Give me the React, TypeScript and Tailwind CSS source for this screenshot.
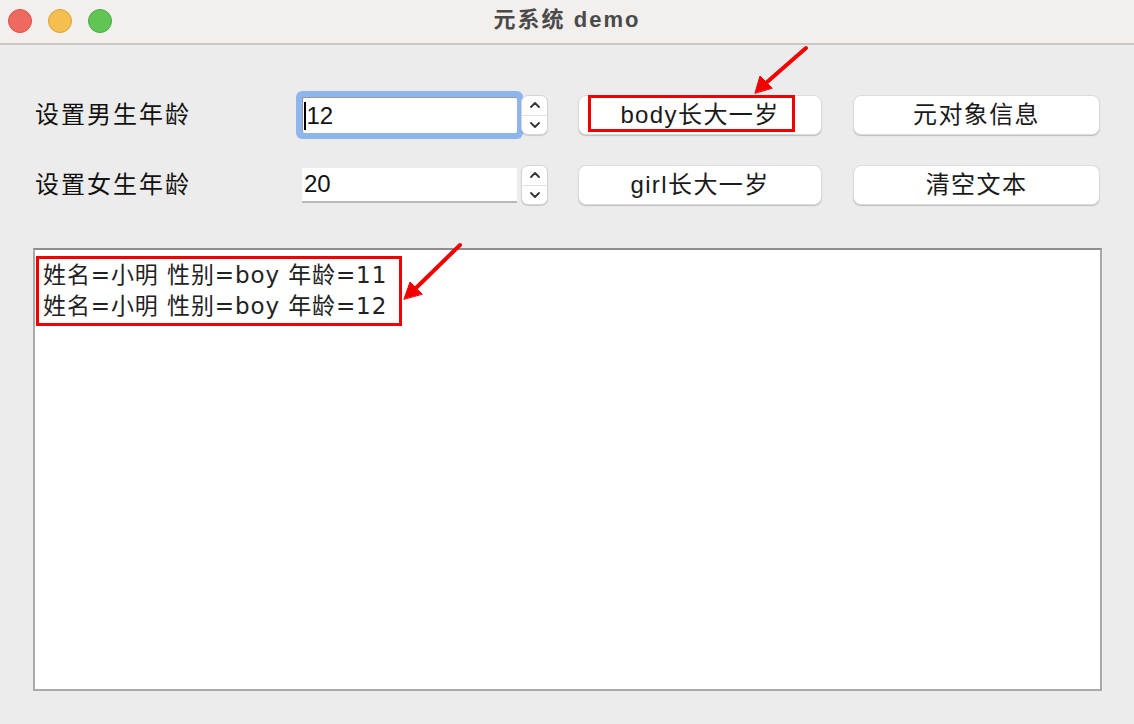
import React from "react";

const font = { fontFamily: '"Liberation Sans", "Noto Sans CJK SC", sans-serif' };
const logFont = { fontFamily: '"DejaVu Sans", "Noto Sans CJK SC", sans-serif' };

function Light({ color, edge }: { color: string; edge: string }) {
  return <span className={`block w-[24px] h-[24px] rounded-full border ${color} ${edge}`} />;
}

function Spinner() {
  return (
    <div className="flex flex-col w-[27px] h-[40px] rounded-[7px] bg-white border border-[#d4d4d4] shadow-[0_1px_1px_rgba(0,0,0,0.15)] overflow-hidden">
      <div className="flex-1 flex items-center justify-center border-b border-[#e2e2e2]">
        <svg width="12" height="8" viewBox="0 0 12 8" fill="none" stroke="#333" strokeWidth="1.8" strokeLinecap="round" strokeLinejoin="round">
          <path d="M2 6 L6 2 L10 6" />
        </svg>
      </div>
      <div className="flex-1 flex items-center justify-center">
        <svg width="12" height="8" viewBox="0 0 12 8" fill="none" stroke="#333" strokeWidth="1.8" strokeLinecap="round" strokeLinejoin="round">
          <path d="M2 2 L6 6 L10 2" />
        </svg>
      </div>
    </div>
  );
}

function Btn({ children, w }: { children: React.ReactNode; w: string }) {
  return (
    <button className={`${w} h-[40px] rounded-[8px] bg-white text-[#1a1a1a] text-[24px] tracking-[1.4px] leading-none border border-[#dcdcdc] shadow-[0_1px_1px_rgba(0,0,0,0.2)] flex items-center justify-center`}>
      {children}
    </button>
  );
}

export default function App() {
  return (
    <div className="relative w-[1134px] h-[724px] bg-[#ececec] overflow-hidden" style={font}>
      {/* title bar */}
      <div className="h-[45px] bg-[#f2efed] border-b-2 border-[#c9c9c9] grid grid-cols-[1fr_auto_1fr] items-center">
        <div className="flex items-center gap-[16px] pl-[8px] -mt-[1px]">
          <Light color="bg-[#ee6a5f]" edge="border-[#d8534a]" />
          <Light color="bg-[#f5bf4f]" edge="border-[#d9a23a]" />
          <Light color="bg-[#61c554]" edge="border-[#4ea943]" />
        </div>
        <div className="text-[22px] font-bold tracking-[2px] text-[#4a4a4a] -mt-[4px]">元系统 demo</div>
        <div />
      </div>

      {/* form rows */}
      <div className="flex flex-col gap-[30px] pt-[50px] pl-[35px]">
        <div className="flex items-center h-[40px]">
          <div className="w-[267px] text-[24px] tracking-[2px] text-[#111]">设置男生年龄</div>
          <div className="w-[215px] h-[36px] bg-white rounded-[2px] shadow-[0_0_0_6px_#8eb5ec] border-t border-l border-[#9a9a9a] flex items-center pl-[1px] text-[24px] text-[#111]">
            <span className="w-[1.5px] h-[28px] bg-black mr-[1px]" />
            12
          </div>
          <div className="ml-[4px]"><Spinner /></div>
          <div className="ml-[30px] relative">
            <Btn w="w-[244px]">body长大一岁</Btn>
            <div className="absolute left-[10px] top-0 w-[207px] h-[37px] border-[3px] border-[#f20000] pointer-events-none" />
          </div>
          <div className="ml-[31px]"><Btn w="w-[247px]">元对象信息</Btn></div>
        </div>
        <div className="flex items-center h-[40px]">
          <div className="w-[267px] text-[24px] tracking-[2px] text-[#111]">设置女生年龄</div>
          <div className="w-[215px] h-[35px] bg-white border-b-2 border-[#b8b8b8] flex items-center pl-[2px] text-[24px] text-[#111]">
            20
          </div>
          <div className="ml-[4px]"><Spinner /></div>
          <div className="ml-[30px]"><Btn w="w-[244px]">girl长大一岁</Btn></div>
          <div className="ml-[31px]"><Btn w="w-[247px]">清空文本</Btn></div>
        </div>
      </div>

      {/* text area */}
      <div className="ml-[33px] mt-[43px] w-[1069px] h-[443px] bg-white border-2 border-[#a9a9a9] border-t-[#8d8d8d] pt-[6px] pl-[1px]">
        <div className="inline-block border-[3px] border-[#f20000] pl-[4px] pr-[12px] py-[1px] text-[23px] tracking-[0.9px] leading-[31px] text-[#222]" style={logFont}>
          <div>姓名=小明 性别=boy 年龄=11</div>
          <div>姓名=小明 性别=boy 年龄=12</div>
        </div>
      </div>

      {/* annotation arrows */}
      <svg className="absolute left-0 top-0 pointer-events-none" width="1134" height="724">
        <g stroke="#f20000" strokeWidth="4" strokeLinecap="round" fill="#f20000">
          <line x1="806" y1="48" x2="766" y2="83" />
          <polygon points="755,93 760,76 772,88" strokeWidth="1" />
          <line x1="460" y1="245" x2="416" y2="288" />
          <polygon points="404,299 410,282 422,294" strokeWidth="1" />
        </g>
      </svg>
    </div>
  );
}
